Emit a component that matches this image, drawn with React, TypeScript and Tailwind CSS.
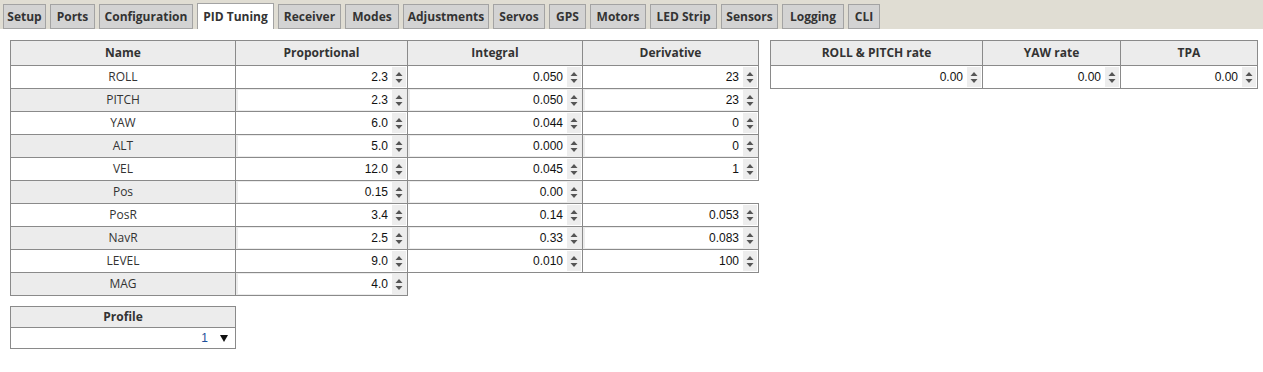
import React from "react";

const tabs: [string, number][] = [
  ["Setup", 43],
  ["Ports", 45],
  ["Configuration", 94],
  ["PID Tuning", 77],
  ["Receiver", 63],
  ["Modes", 54],
  ["Adjustments", 86],
  ["Servos", 52],
  ["GPS", 37],
  ["Motors", 56],
  ["LED Strip", 67],
  ["Sensors", 57],
  ["Logging", 62],
  ["CLI", 32],
];

type Row = { name: string; p?: string; i?: string; d?: string };
const rows: Row[] = [
  { name: "ROLL", p: "2.3", i: "0.050", d: "23" },
  { name: "PITCH", p: "2.3", i: "0.050", d: "23" },
  { name: "YAW", p: "6.0", i: "0.044", d: "0" },
  { name: "ALT", p: "5.0", i: "0.000", d: "0" },
  { name: "VEL", p: "12.0", i: "0.045", d: "1" },
  { name: "Pos", p: "0.15", i: "0.00" },
  { name: "PosR", p: "3.4", i: "0.14", d: "0.053" },
  { name: "NavR", p: "2.5", i: "0.33", d: "0.083" },
  { name: "LEVEL", p: "9.0", i: "0.010", d: "100" },
  { name: "MAG", p: "4.0" },
];

const segoe = { fontFamily: '"Open Sans", "Noto Sans", sans-serif' };

function Spinner() {
  return (
    <div className="w-[14px] h-full bg-[#ededed] flex items-center justify-center shrink-0">
      <svg width="8" height="13" viewBox="0 0 8 13">
        <path d="M0.5 5 L4 1 L7.5 5 Z" fill="#555" />
        <path d="M0.5 8 L4 12 L7.5 8 Z" fill="#555" />
      </svg>
    </div>
  );
}

function NumInput({ value }: { value: string }) {
  return (
    <div className="h-full w-full pl-[2px] pr-[1px] py-[1px]">
      <div className="h-full w-full bg-white flex items-stretch">
        <div
          className="flex-1 flex items-center justify-end pr-[4px] text-[12px] text-[#111]"
          style={{ fontFamily: '"Liberation Sans", Arial, sans-serif' }}
        >
          {value}
        </div>
        <Spinner />
      </div>
    </div>
  );
}

function HeadCell({ children }: { children: React.ReactNode }) {
  return (
    <div
      className="h-[25px] bg-[#ececec] border-b border-r border-[#8a8a8a] flex items-center justify-center text-[12px] font-bold text-[#333]"
      style={segoe}
    >
      {children}
    </div>
  );
}

export default function App() {
  return (
    <div className="w-[1263px] h-[372px] bg-white overflow-hidden">
      <div className="h-[29px] bg-[#e0ddd3] flex items-end pl-[3px] gap-[4px]">
        {tabs.map(([t, w]) => {
          const active = t === "PID Tuning";
          return (
            <div
              key={t}
              className={
                "flex items-center justify-center text-[12px] font-bold text-[#333] border-[#a3a3a3] " +
                (active
                  ? "h-[26px] bg-white border-l border-r border-t"
                  : "h-[25px] bg-[#d3d3d3] border")
              }
              style={{ ...segoe, width: w }}
            >
              {t}
            </div>
          );
        })}
      </div>

      <div className="pl-[10px] pt-[11px] flex items-start gap-[11px]">
        <div className="flex flex-col gap-[10px]">
          <div className="grid grid-cols-[225px_172px_175px_176px] border-l border-t border-[#8a8a8a] w-[749px]">
            <HeadCell>Name</HeadCell>
            <HeadCell>Proportional</HeadCell>
            <HeadCell>Integral</HeadCell>
            <HeadCell>Derivative</HeadCell>
            {rows.map((r, idx) => {
              const gray = idx % 2 === 1;
              const bg = gray ? "bg-[#ececec]" : "bg-white";
              const isMag = r.name === "MAG";
              return (
                <React.Fragment key={r.name}>
                  <div
                    className={"h-[23px] border-r border-b border-[#8a8a8a] flex items-center justify-center text-[12px] text-[#333] " + bg}
                    style={segoe}
                  >
                    {r.name}
                  </div>
                  <div className={"h-[23px] border-r border-b border-[#8a8a8a] " + bg}>
                    {r.p && <NumInput value={r.p} />}
                  </div>
                  <div
                    className={
                      "h-[23px] border-[#8a8a8a] " +
                      (r.i ? "border-r border-b " + bg : isMag ? "bg-white" : "border-r border-b bg-white")
                    }
                  >
                    {r.i && <NumInput value={r.i} />}
                  </div>
                  <div
                    className={
                      "h-[23px] border-[#8a8a8a] " +
                      (r.d ? "border-r border-b " + bg : isMag ? "bg-white" : "border-b bg-white")
                    }
                  >
                    {r.d && <NumInput value={r.d} />}
                  </div>
                </React.Fragment>
              );
            })}
          </div>

          <div className="w-[226px] border-l border-t border-[#8a8a8a]">
            <div
              className="h-[21px] bg-[#ececec] border-r border-b border-[#8a8a8a] flex items-center justify-center text-[12px] font-bold text-[#333]"
              style={segoe}
            >
              Profile
            </div>
            <div className="h-[21px] bg-white border-r border-b border-[#8a8a8a] flex items-center justify-end pr-[7px]">
              <span
                className="text-[12px] text-[#1d4f9a] mr-[12px]"
                style={{ fontFamily: '"Liberation Sans", Arial, sans-serif' }}
              >
                1
              </span>
              <svg width="8" height="7" viewBox="0 0 8 7">
                <path d="M0 0 L8 0 L4 7 Z" fill="#111" />
              </svg>
            </div>
          </div>
        </div>

        <div className="grid grid-cols-[212px_138px_137px] border-l border-t border-[#8a8a8a] w-[488px]">
          <HeadCell>ROLL &amp; PITCH rate</HeadCell>
          <HeadCell>YAW rate</HeadCell>
          <HeadCell>TPA</HeadCell>
          <div className="h-[23px] border-r border-b border-[#8a8a8a] bg-white">
            <NumInput value="0.00" />
          </div>
          <div className="h-[23px] border-r border-b border-[#8a8a8a] bg-white">
            <NumInput value="0.00" />
          </div>
          <div className="h-[23px] border-r border-b border-[#8a8a8a] bg-white">
            <NumInput value="0.00" />
          </div>
        </div>
      </div>
    </div>
  );
}
